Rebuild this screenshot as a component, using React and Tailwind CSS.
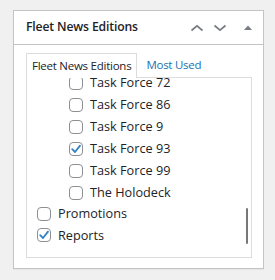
import React from 'react';

const Check = ({ checked }) => (
  <span className="relative w-[14px] h-[14px] shrink-0 rounded-[4px] border border-[#8c8f94] bg-white">
    {checked && (
      <svg viewBox="0 0 14 14" className="absolute -left-[1px] -top-[1px] w-[14px] h-[14px]">
        <path d="M3.2 7.2 L6 10 L11 3.6" fill="none" stroke="#3582c4" strokeWidth="1.8" strokeLinecap="round" strokeLinejoin="round" />
      </svg>
    )}
  </span>
);

const Row = ({ label, checked, nested }) => (
  <div className={`flex items-center gap-[7px] ${nested ? 'h-[22px] pl-[42px]' : 'h-[21.5px] pl-[10px]'}`}>
    <Check checked={checked} />
    <span className="whitespace-nowrap">{label}</span>
  </div>
);

const nestedItems = [
  { label: 'Task Force 72' },
  { label: 'Task Force 86' },
  { label: 'Task Force 9' },
  { label: 'Task Force 93', checked: true },
  { label: 'Task Force 99' },
  { label: 'The Holodeck' },
];

export default function App() {
  return (
    <div
      className="w-[275px] h-[280px] bg-[#f0f0f1] pt-[10px] pl-[13px] text-[11.5px] tracking-[-0.25px] text-[#1d2327]"
      style={{ fontFamily: '"Open Sans", "Noto Sans", sans-serif' }}
    >
      <div className="w-[251px] h-[259px] border border-[#c3c4c7] bg-white shadow-[0_1px_1px_rgba(0,0,0,0.04)]">
        {/* header */}
        <div className="h-[34px] border-b border-[#c3c4c7] flex items-center pl-[12px] pr-[11px]">
          <h2 className="text-[12.2px] font-semibold tracking-[-0.15px] flex-1 whitespace-nowrap">Fleet News Editions</h2>
          <div className="flex items-center text-[#787c82]">
            <svg viewBox="0 0 14 8" className="w-[14px] h-[8px]">
              <path d="M1.5 6.5 L7 1.8 L12.5 6.5" fill="none" stroke="currentColor" strokeWidth="1.7" />
            </svg>
            <svg viewBox="0 0 14 8" className="w-[14px] h-[8px] ml-[9px]">
              <path d="M1.5 1.5 L7 6.2 L12.5 1.5" fill="none" stroke="currentColor" strokeWidth="1.7" />
            </svg>
            <svg viewBox="0 0 8 5" className="w-[8px] h-[5px] ml-[17px]">
              <path d="M0 5 L4 0.5 L8 5 Z" fill="currentColor" />
            </svg>
          </div>
        </div>

        {/* body */}
        <div className="pl-[12px] pr-[11px] pt-[8px]">
          <div className="flex items-end h-[24px]">
            <div className="h-[25px] px-[5px] flex items-center whitespace-nowrap border border-b-0 border-[#dcdcde] bg-white relative z-10 -mb-[1px]">
              Fleet News Editions
            </div>
            <a className="ml-[9px] h-[24px] flex items-center whitespace-nowrap text-[#2271b1]">Most Used</a>
          </div>
          <div className="relative h-[181px] border border-[#dcdcde] overflow-hidden text-[12.7px] tracking-normal">
            <div className="-mt-[6px]">
              {nestedItems.map((it) => (
                <Row key={it.label} label={it.label} checked={it.checked} nested />
              ))}
              <div className="-mt-[1px]">
                <Row label="Promotions" />
                <Row label="Reports" checked />
              </div>
            </div>
            <div className="absolute right-[3px] top-[130px] w-[2px] h-[36px] bg-[#787878] rounded-full" />
          </div>
        </div>
      </div>
    </div>
  );
}
